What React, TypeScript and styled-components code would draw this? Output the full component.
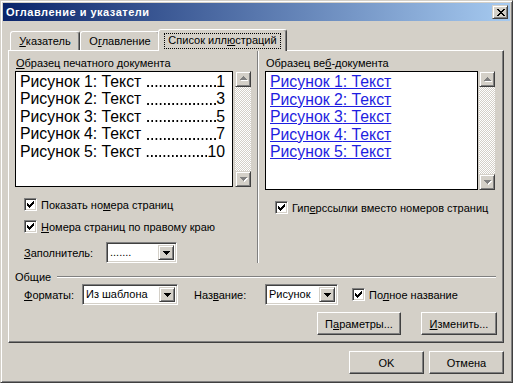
import React from 'react'
import styled, { createGlobalStyle, css } from 'styled-components'

const GlobalStyle = createGlobalStyle`
  * { box-sizing: border-box; }
  html, body { margin: 0; padding: 0; }
  body {
    background: #d4d0c8;
    font-family: "Liberation Sans", Arial, sans-serif;
    font-size: 11px;
    color: #000;
  }
`

// classic 3d borders
const raised = css`
  border: 1px solid;
  border-color: #fff #404040 #404040 #fff;
  box-shadow: inset -1px -1px #808080;
`
const raisedSmall = css`
  border: 1px solid;
  border-color: #d4d0c8 #404040 #404040 #d4d0c8;
  box-shadow: inset 1px 1px #fff, inset -1px -1px #808080;
`
const sunken = css`
  border: 1px solid;
  border-color: #808080 #fff #fff #808080;
  box-shadow: inset 1px 1px #404040, inset -1px -1px #d4d0c8;
`

const printRows = [
  { n: 1, page: '1' },
  { n: 2, page: '3' },
  { n: 3, page: '5' },
  { n: 4, page: '7' },
  { n: 5, page: '10' },
]

const ArrowDown = ({ color = '#000' }: { color?: string }) => (
  <svg width="7" height="4" viewBox="0 0 7 4" shapeRendering="crispEdges">
    <path d="M0 0h7v1H0zM1 1h5v1H1zM2 2h3v1H2zM3 3h1v1H3z" fill={color} />
  </svg>
)

const DisabledArrow = ({ up }: { up?: boolean }) => {
  const d = up
    ? 'M3 0h1v1H3zM2 1h3v1H2zM1 2h5v1H1zM0 3h7v1H0z'
    : 'M0 0h7v1H0zM1 1h5v1H1zM2 2h3v1H2zM3 3h1v1H3z'
  return (
    <svg width="8" height="5" viewBox="0 0 8 5" shapeRendering="crispEdges">
      <path d={d} fill="#fff" transform="translate(1 1)" />
      <path d={d} fill="#808080" />
    </svg>
  )
}

const CheckMark = () => (
  <svg width="7" height="7" viewBox="0 0 7 7" shapeRendering="crispEdges">
    <path
      d="M0 2h1v3H0zM1 3h1v3H1zM2 4h1v3H2zM3 3h1v3H3zM4 2h1v3H4zM5 1h1v3H5zM6 0h1v3H6z"
      fill="#000"
    />
  </svg>
)

const CloseGlyph = () => (
  <svg width="8" height="7" viewBox="0 0 8 7" shapeRendering="crispEdges">
    <path
      d="M0 0h2v1H0zM6 0h2v1H6zM1 1h2v1H1zM5 1h2v1H5zM2 2h4v1H2zM3 3h2v1H3zM2 4h4v1H2zM1 5h2v1H1zM5 5h2v1H5zM0 6h2v1H0zM6 6h2v1H6z"
      fill="#000"
    />
  </svg>
)

function Check({ children, indent }: { children: React.ReactNode; indent: number }) {
  return (
    <CheckRow $indent={indent}>
      <CheckBox>
        <CheckMark />
      </CheckBox>
      <span>{children}</span>
    </CheckRow>
  )
}

function Combo({ value, width }: { value: string; width: number }) {
  return (
    <ComboBox $width={width}>
      <ComboText>{value}</ComboText>
      <DropButton>
        <ArrowDown />
      </DropButton>
    </ComboBox>
  )
}

function ScrollBar() {
  return (
    <Scroll>
      <ScrollButton>
        <DisabledArrow up />
      </ScrollButton>
      <ScrollButton>
        <DisabledArrow />
      </ScrollButton>
    </Scroll>
  )
}

export default function App() {
  return (
    <>
      <GlobalStyle />
      <Window>
        <TitleBar>
          <Title>Оглавление и указатели</Title>
          <CloseButton>
            <CloseGlyph />
          </CloseButton>
        </TitleBar>

        <Body>
          <TabStrip>
            <Tab $width={70}>
              <span>
                <Key>У</Key>казатель
              </span>
            </Tab>
            <Tab $width={80}>
              <span>
                О<Key>г</Key>лавление
              </span>
            </Tab>
            <Tab $width={129} $active>
              <Focus>
                Список илл<Key>ю</Key>страций
              </Focus>
            </Tab>
          </TabStrip>

          <Panel>
            <TopSection>
              <Column $width={248}>
                <Caption>
                  <Key>О</Key>бразец печатного документа
                </Caption>
                <PreviewRow $gap={2}>
                  <Preview $width={218}>
                    {printRows.map((r) => (
                      <PrintLine key={r.n}>
                        <span>Рисунок {r.n}: Текст</span>
                        <Leader />
                        <span>{r.page}</span>
                      </PrintLine>
                    ))}
                  </Preview>
                  <ScrollBar />
                </PreviewRow>
                <Options>
                  <Check indent={9}>
                    Показать но<Key>м</Key>ера страниц
                  </Check>
                  <Check indent={9}>
                    <Key>Н</Key>омера страниц по правому краю
                  </Check>
                  <FieldRow $indent={9}>
                    <FieldLabel $width={82}>
                      <Key>З</Key>аполнитель:
                    </FieldLabel>
                    <Combo value="......." width={71} />
                  </FieldRow>
                </Options>
              </Column>
              <Separator />
              <Column>
                <Caption>
                  Образец ве<Key>б</Key>-документа
                </Caption>
                <PreviewRow $gap={1}>
                  <Preview $width={213}>
                    {printRows.map((r) => (
                      <WebLine key={r.n}>Рисунок {r.n}: Текст</WebLine>
                    ))}
                  </Preview>
                  <ScrollBar />
                </PreviewRow>
                <Options>
                  <Check indent={10}>
                    Гип<Key>е</Key>рссылки вместо номеров страниц
                  </Check>
                </Options>
              </Column>
            </TopSection>

            <GroupHeader>
              <span>Общие</span>
              <GroupLine />
            </GroupHeader>
            <FieldRow $indent={15}>
              <FieldLabel $width={58}>
                <Key>Ф</Key>орматы:
              </FieldLabel>
              <Combo value="Из шаблона" width={96} />
              <FieldLabel $width={71} $gap={16}>
                Наз<Key>в</Key>ание:
              </FieldLabel>
              <Combo value="Рисунок" width={73} />
              <Spacer $w={14} />
              <Check indent={0}>
                По<Key>л</Key>ное название
              </Check>
            </FieldRow>
            <ButtonRow>
              <Button $width={84}>
                П<Key>а</Key>раметры...
              </Button>
              <Button $width={76}>
                <Key>И</Key>зменить...
              </Button>
            </ButtonRow>
          </Panel>

          <Footer>
            <Button $width={75}>OK</Button>
            <Button $width={75}>Отмена</Button>
          </Footer>
        </Body>
      </Window>
    </>
  )
}

const Window = styled.div`
  width: 513px;
  height: 383px;
  background: #d4d0c8;
  border: 1px solid;
  border-color: #d4d0c8 #404040 #404040 #d4d0c8;
  box-shadow: inset 1px 1px #fff, inset -1px -1px #808080;
  padding: 2px;
  display: flex;
  flex-direction: column;
`

const TitleBar = styled.div`
  height: 18px;
  flex-shrink: 0;
  display: flex;
  align-items: center;
  justify-content: space-between;
  padding: 0 2px 0 3px;
  background: linear-gradient(to right, #0a246a, #a6caf0);
`

const Title = styled.div`
  color: #fff;
  font-weight: bold;
  font-size: 11px;
  letter-spacing: 0.5px;
`

const CloseButton = styled.div`
  width: 16px;
  height: 14px;
  background: #d4d0c8;
  ${raisedSmall};
  display: flex;
  align-items: center;
  justify-content: center;
  padding-left: 1px;
`

const Body = styled.div`
  flex: 1;
  display: flex;
  flex-direction: column;
  padding: 8px 6px 0 5px;
`

const TabStrip = styled.div`
  height: 21px;
  display: flex;
  align-items: flex-end;
  padding-left: 2px;
`

const Tab = styled.div<{ $width: number; $active?: boolean }>`
  width: ${(p) => p.$width}px;
  height: ${(p) => (p.$active ? 22 : 19)}px;
  margin-left: ${(p) => (p.$active ? -2 : 0)}px;
  margin-bottom: ${(p) => (p.$active ? -1 : 0)}px;
  position: relative;
  z-index: ${(p) => (p.$active ? 2 : 0)};
  background: #d4d0c8;
  border: 1px solid;
  border-bottom: none;
  border-color: #fff #404040 transparent #fff;
  border-radius: 3px 3px 0 0;
  box-shadow: inset -1px 0 #808080;
  display: flex;
  justify-content: center;
  align-items: flex-start;
  padding-top: 3px;
  line-height: 13px;
  white-space: nowrap;
`

const Focus = styled.span`
  border: 1px dotted #000;
  padding: 0 3px 1px;
`

const Key = styled.span`
  text-decoration: underline;
`

const Panel = styled.div`
  position: relative;
  z-index: 1;
  height: 293px;
  ${raised};
  display: flex;
  flex-direction: column;
`

const TopSection = styled.div`
  height: 212px;
  display: flex;
`

const Column = styled.div<{ $width?: number }>`
  ${(p) => (p.$width ? `width: ${p.$width}px;` : 'flex: 1;')}
  padding: 6px 0 0 6px;
  display: flex;
  flex-direction: column;
`

const Separator = styled.div`
  width: 2px;
  border-left: 1px solid #808080;
  border-right: 1px solid #fff;
`

const Caption = styled.div`
  height: 14px;
  line-height: 13px;
  padding-left: 1px;
  white-space: nowrap;
`

const PreviewRow = styled.div<{ $gap: number }>`
  display: flex;
  gap: ${(p) => p.$gap}px;
  height: 119px;
`

const Preview = styled.div<{ $width: number }>`
  width: ${(p) => p.$width}px;
  background: #fff;
  border: 1px solid #000;
  padding: 1px 7px 0 4px;
  font-family: "Liberation Sans", Arial, sans-serif;
  font-size: 15.8px;
  line-height: 17.5px;
  overflow: hidden;
`

const PrintLine = styled.div`
  display: flex;
  white-space: nowrap;
`

// tab leader drawn as a row of dots on the baseline
const Leader = styled.span`
  flex: 1;
  margin: 0 0 0 5px;
  background-image: linear-gradient(to left, #000 1.6px, transparent 1.6px);
  background-size: 4.2px 1.6px;
  background-repeat: repeat-x;
  background-position: right bottom 3.6px;
`

const WebLine = styled.div`
  color: #1e1ee0;
  text-decoration: underline;
  white-space: nowrap;
`

const Scroll = styled.div`
  width: 16px;
  display: flex;
  flex-direction: column;
  justify-content: space-between;
  background-color: #fff;
  background-image: repeating-conic-gradient(#d4d0c8 0 25%, #fff 0 50%);
  background-size: 2px 2px;
`

const ScrollButton = styled.div`
  width: 16px;
  height: 16px;
  background: #d4d0c8;
  ${raisedSmall};
  display: flex;
  align-items: center;
  justify-content: center;
  padding-left: 1px;
`

const Options = styled.div`
  margin-top: 11px;
  display: flex;
  flex-direction: column;
  gap: 9px;
`

const CheckRow = styled.div<{ $indent: number }>`
  display: flex;
  align-items: center;
  gap: 4px;
  padding-left: ${(p) => p.$indent}px;
  height: 13px;
  white-space: nowrap;
`

const CheckBox = styled.span`
  width: 13px;
  height: 13px;
  flex-shrink: 0;
  background: #fff;
  ${sunken};
  display: flex;
  align-items: center;
  justify-content: center;
`

const FieldRow = styled.div<{ $indent: number }>`
  display: flex;
  align-items: center;
  height: 21px;
  padding-left: ${(p) => p.$indent}px;
  white-space: nowrap;
`

const FieldLabel = styled.span<{ $width: number; $gap?: number }>`
  width: ${(p) => p.$width}px;
  margin-left: ${(p) => p.$gap ?? 0}px;
  flex-shrink: 0;
`

const Spacer = styled.span<{ $w: number }>`
  width: ${(p) => p.$w}px;
  flex-shrink: 0;
`

const ComboBox = styled.div<{ $width: number }>`
  width: ${(p) => p.$width}px;
  height: 21px;
  flex-shrink: 0;
  background: #fff;
  ${sunken};
  padding: 2px;
  display: flex;
  align-items: stretch;
`

const ComboText = styled.span`
  flex: 1;
  padding-left: 1px;
  line-height: 15px;
  overflow: hidden;
`

const DropButton = styled.span`
  width: 16px;
  background: #d4d0c8;
  ${raisedSmall};
  display: flex;
  align-items: center;
  justify-content: center;
`

const GroupHeader = styled.div`
  margin-top: 7px;
  height: 14px;
  display: flex;
  align-items: center;
  padding-left: 6px;
`

const GroupLine = styled.div`
  flex: 1;
  height: 2px;
  margin: 0 7px 0 6px;
  border-top: 1px solid #808080;
  border-bottom: 1px solid #fff;
`

const ButtonRow = styled.div`
  margin-top: 7px;
  display: flex;
  justify-content: flex-end;
  gap: 20px;
  padding-right: 6px;
`

const Button = styled.div<{ $width: number }>`
  width: ${(p) => p.$width}px;
  height: 23px;
  background: #d4d0c8;
  ${raised};
  display: flex;
  align-items: center;
  justify-content: center;
  white-space: nowrap;
`

const Footer = styled.div`
  margin-top: 8px;
  display: flex;
  justify-content: flex-end;
  gap: 5px;
`
